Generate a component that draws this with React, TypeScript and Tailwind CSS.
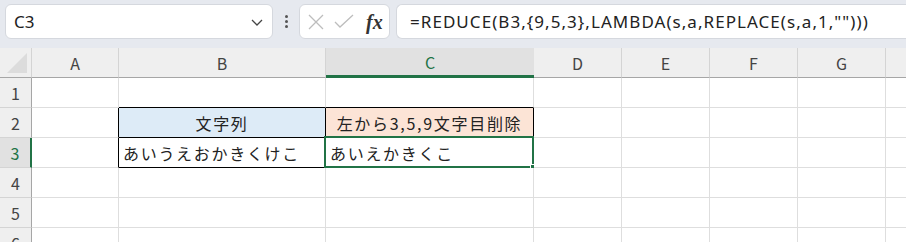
import React from "react";

const cols = [
  { k: "A", w: 87 },
  { k: "B", w: 207 },
  { k: "C", w: 208 },
  { k: "D", w: 88 },
  { k: "E", w: 88 },
  { k: "F", w: 88 },
  { k: "G", w: 88 },
  { k: "", w: 88 },
];

const font = { fontFamily: '"Noto Sans CJK JP", "Noto Sans", sans-serif' };

function Cell({ r, c }: { r: number; c: string }) {
  let rb = "border-r-[#dedede]";
  let bb = "border-b-[#dedede]";
  let bg = "bg-white";
  let content: React.ReactNode = null;
  let extra = "";
  const inTable = (r === 2 || r === 3) && (c === "B" || c === "C");
  if (inTable) {
    rb = "border-r-black";
    bb = "border-b-black";
  }
  if (c === "A" && (r === 2 || r === 3)) rb = "border-r-black";
  if (r === 1 && (c === "B" || c === "C")) bb = "border-b-black";
  if (r === 2 && c === "B") {
    bg = "bg-[#ddebf7]";
    content = "文字列";
    extra = "justify-center";
  }
  if (r === 2 && c === "C") {
    bg = "bg-[#fce4d6]";
    content = "左から3,5,9文字目削除";
    extra = "justify-center";
  }
  if (r === 3 && c === "B") {
    content = "あいうえおかきくけこ";
    extra = "pl-[4px]";
  }
  if (r === 3 && c === "C") {
    content = "あいえかきくこ";
    extra = "pl-[4px]";
  }
  return (
    <div
      className={`relative flex h-[30px] items-center border-r border-b ${rb} ${bb} ${bg} ${extra} text-[16px] text-[#222] tracking-[1.7px] whitespace-nowrap`}
      style={font}
    >
      {content}
      {r === 3 && c === "C" && (
        <div className="pointer-events-none absolute -left-[2px] -top-[2px] -right-px -bottom-px border-2 border-[#217346]">
          <div className="absolute -right-[5px] -bottom-[5px] h-[7px] w-[7px] bg-[#217346] border border-white" />
        </div>
      )}
    </div>
  );
}

export default function App() {
  const rows = [1, 2, 3, 4, 5, 6];
  return (
    <div className="h-[242px] w-[906px] overflow-hidden bg-white" style={font}>
      {/* formula bar */}
      <div className="flex h-[48px] items-start bg-[#e6e9ef] pt-[4px] pl-[5px]">
        <div className="flex h-[35px] w-[268px] items-center justify-between rounded-[6px] border border-[#d5d8de] bg-white pl-[8px] pr-[8px]">
          <span className="text-[17px] text-[#222]" style={{ fontFamily: '"Noto Sans", sans-serif' }}>C3</span>
          <svg width="14" height="10" viewBox="0 0 14 10">
            <path d="M2 3 L7 8 L12 3" fill="none" stroke="#444" strokeWidth="1.3" />
          </svg>
        </div>
        <div className="flex h-[35px] w-[26px] flex-col items-center justify-center gap-[2px]">
          <div className="h-[3px] w-[3px] rounded-full bg-[#555]" />
          <div className="h-[3px] w-[3px] rounded-full bg-[#555]" />
          <div className="h-[3px] w-[3px] rounded-full bg-[#555]" />
        </div>
        <div className="flex h-[35px] w-[91px] items-center rounded-[6px] border border-[#d5d8de] bg-white pl-[7px]">
          <svg width="18" height="18" viewBox="0 0 18 18">
            <path d="M2 2 L16 16 M16 2 L2 16" stroke="#bdbdbd" strokeWidth="1.3" fill="none" />
          </svg>
          <svg width="22" height="18" viewBox="0 0 22 18" className="ml-[8px]">
            <path d="M2 9 L7 14 L20 2" stroke="#bdbdbd" strokeWidth="1.3" fill="none" />
          </svg>
          <span
            className="ml-[11px] text-[20px] font-bold italic text-[#333] leading-none"
            style={{ fontFamily: '"Liberation Serif", serif' }}
          >
            fx
          </span>
        </div>
        <div className="ml-[6px] flex h-[35px] flex-1 items-center rounded-l-[6px] border border-r-0 border-[#d5d8de] bg-white pl-[13px]">
          <span className="text-[17px] text-[#222] whitespace-nowrap tracking-[1.05px]" style={{ fontFamily: '"Noto Sans", sans-serif' }}>
            =REDUCE(B3,{"{"}9,5,3{"}"},LAMBDA(s,a,REPLACE(s,a,1,"")))
          </span>
        </div>
      </div>

      {/* sheet */}
      <div
        className="grid"
        style={{ gridTemplateColumns: `32px ${cols.map((c) => c.w + "px").join(" ")}` }}
      >
        <div className="relative h-[30px] border-r border-b border-r-[#d4d4d4] border-b-[#a6a6a6] bg-[#efefef] overflow-hidden">
          <svg className="absolute right-[4px] bottom-[4px]" width="20" height="20" viewBox="0 0 20 20">
            <path d="M20 0 L20 20 L0 20 Z" fill="#dcdcdc" />
          </svg>
        </div>
        {cols.map((c, i) =>
          c.k === "C" ? (
            <div
              key={i}
              className="flex h-[30px] items-center justify-center border-b-[3px] border-b-[#217346] bg-[#e1e1e1] text-[16px] text-[#217346]"
            >
              {c.k}
            </div>
          ) : (
            <div
              key={i}
              className="flex h-[30px] items-center justify-center border-r border-b border-r-[#d4d4d4] border-b-[#a6a6a6] bg-[#efefef] text-[16px] text-[#444]"
            >
              {c.k}
            </div>
          )
        )}
        {rows.map((r) => (
          <React.Fragment key={r}>
            {r === 3 ? (
              <div className="flex h-[30px] items-center justify-center border-r-[2px] border-b border-r-[#217346] border-b-[#d4d4d4] bg-[#e1e1e1] text-[16px] text-[#217346]">
                {r}
              </div>
            ) : (
              <div className="flex h-[30px] items-center justify-center border-r border-b border-r-[#a6a6a6] border-b-[#d4d4d4] bg-[#efefef] text-[16px] text-[#444]">
                {r}
              </div>
            )}
            {cols.map((c, i) => (
              <Cell key={i} r={r} c={c.k} />
            ))}
          </React.Fragment>
        ))}
      </div>
    </div>
  );
}
